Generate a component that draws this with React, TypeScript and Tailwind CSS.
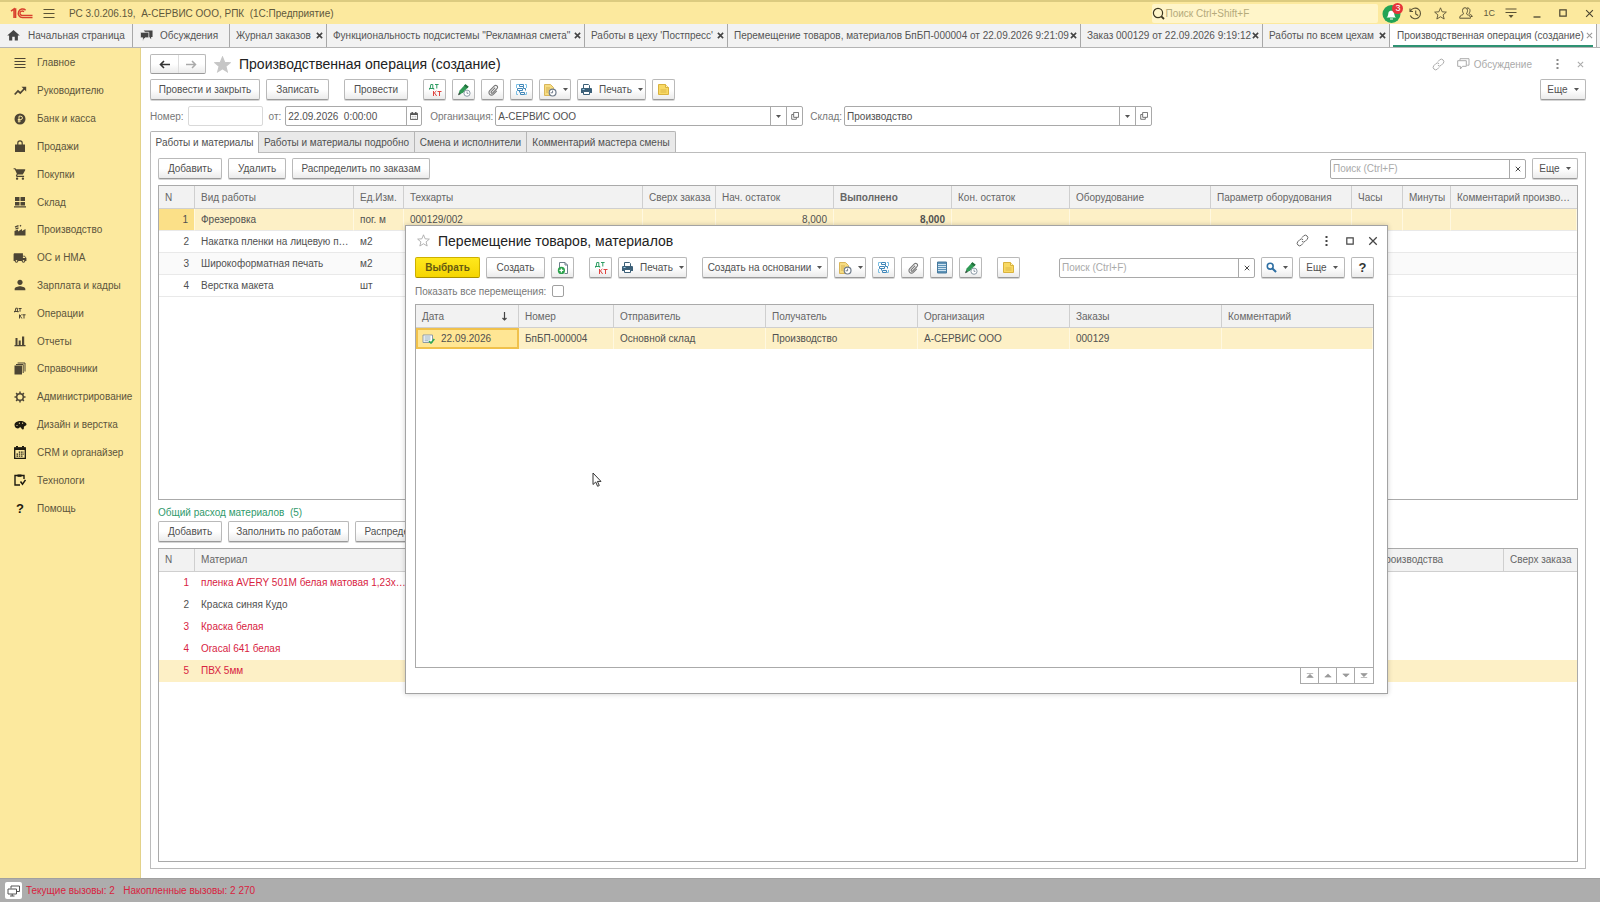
import React from "react";
import { MdHome, MdShoppingCart, MdLocalShipping, MdPerson } from "react-icons/md";

type Kids = { children?: React.ReactNode };

/* ---------- icons ---------- */

function Svg({ w = 16, h = 16, box, children }: Kids & { w?: number; h?: number; box?: string }) {
  return (
    <svg width={w} height={h} viewBox={box ?? `0 0 ${w} ${h}`} fill="none" className="shrink-0" aria-hidden="true">
      {children}
    </svg>
  );
}

const Logo = () => (
  <Svg w={23} h={12}>
    <path d="M1 4.2 4 2v9M4 2h1.6v9" stroke="#d8402c" strokeWidth="1.5" />
    <path d="M15.6 3.2A4.3 4.3 0 1 0 12.4 10.6H22.5" stroke="#d8402c" strokeWidth="1.5" />
    <path d="M13.9 4.8A2.2 2.2 0 1 0 12.4 8.4H22.5" stroke="#d8402c" strokeWidth="1.3" />
  </Svg>
);
const Burger = () => (
  <Svg w={12} h={11}>
    <path d="M0.5 1.5h11M0.5 5.5h11M0.5 9.5h11" stroke="#5a5235" strokeWidth="1.1" />
  </Svg>
);
const Caret = () => (
  <Svg w={5} h={3}>
    <path d="M0 0h5L2.5 3z" fill="#555" />
  </Svg>
);
const Cross = ({ size = 7, color = "#444", weight = 1.8 }: { size?: number; color?: string; weight?: number }) => (
  <Svg w={size} h={size} box="0 0 8 8">
    <path d="M1 1l6 6M7 1L1 7" stroke={color} strokeWidth={weight} />
  </Svg>
);
const OpenIcon = () => (
  <Svg w={8} h={8} box="0 0 9 9">
    <path d="M3 0.5h5.5V6H3zM3 2.8H0.8v5.4H6V6" stroke="#666" />
  </Svg>
);
const CalendarIcon = () => (
  <Svg w={8} h={8} box="0 0 9 9">
    <path d="M0.5 1.5h8v7h-8z" stroke="#555" />
    <path d="M0.5 2.5h8M2.5 0v2M6.5 0v2" stroke="#555" strokeWidth="1.6" />
    <path d="M2 5h5M2 7h5" stroke="#999" strokeDasharray="1 1" />
  </Svg>
);
const DtKt = () => (
  <Svg w={14} h={14}>
    <path d="M1 5.5h5M1.5 5.5V6.6M5.8 5.5v1.1M2.2 5.3 2.8 1.5h2v4M7 1.5h3.6M8.8 1.5v4" stroke="#2e9d63" />
    <path d="M5.5 8v5M5.7 10.6 8.3 8M6.6 10l2 3M9.5 8.5h4M11.5 8.5V13" stroke="#e0433f" />
  </Svg>
);
const PenClock = () => (
  <Svg w={14} h={14}>
    <path d="M1.2 12.2 2.6 7.6 8.4 1.2 11.6 3.8 6.2 9.6z" fill="#2f9a55" />
    <path d="M1.2 12.2 2 9.4l1.8 1.6z" fill="#444" />
    <path d="M8.4 1.2l3.2 2.6-1.4 1.5L7 2.7z" fill="#23703d" />
    <circle cx="10" cy="10.2" r="3.1" fill="#fff" stroke="#8a99a5" />
    <path d="M10 8.5v1.9h1.4" stroke="#8a99a5" />
  </Svg>
);
const Clip = () => (
  <Svg w={12} h={12} box="0 0 14 14">
    <path d="M9.6 4.2 5 9a1.1 1.1 0 0 0 1.6 1.5l5-5.2a2.1 2.1 0 0 0-3-3L3.2 7.8a3 3 0 0 0 4.2 4.3l4-4.1" stroke="#777" strokeWidth="1.3" />
  </Svg>
);
const Structure = () => (
  <Svg w={13} h={13}>
    <path d="M1.5 5V1.500H4M10 1.5h1.5V5M1.5 8v3.500H3M11.500 9v2.500H10" stroke="#7cc0e4" />
    <path d="M4.500 1.500h4v2h-4zM2.500 5.500h5v2h-5zM5.500 9.500h4v2h-4z" stroke="#3f86b8" />
    <path d="M8.500 3.500v2h2v2M4.500 7.500v2" stroke="#3f86b8" />
  </Svg>
);
const DocClock = () => (
  <Svg w={14} h={14}>
    <path d="M1.5 1.5h6l3 3v8h-9z" fill="#f6dc82" stroke="#d9b65a" />
    <path d="M3 5h4M3 7h3M3 9h2" stroke="#d4b050" />
    <circle cx="9.6" cy="9.6" r="3.4" fill="#fff" stroke="#6d7a8a" strokeWidth="1.2" />
    <path d="M9.6 7.6v2.2h-2" stroke="#6d7a8a" />
  </Svg>
);
const Printer = () => (
  <Svg w={13} h={13}>
    <path d="M3.5 5V1.5h5l1 1V5" fill="#fff" stroke="#3c6078" />
    <path d="M1 6a1 1 0 0 1 1-1h9a1 1 0 0 1 1 1v4H1z" fill="#3c6078" />
    <path d="M3.5 8.5h6v3h-6z" fill="#fff" stroke="#3c6078" />
    <path d="M2.5 6.5h2" stroke="#9fd0ee" />
  </Svg>
);
const Note = () => (
  <Svg w={13} h={13}>
    <path d="M1.5 1.5h7l3 3v7h-10z" fill="#f8d964" stroke="#d9b23e" />
    <path d="M8.5 1.5v3h3" fill="#fff2b8" stroke="#d9b23e" />
    <path d="M3.5 7h6M3.5 9h6" stroke="#dcb747" />
  </Svg>
);
const NewDoc = () => (
  <Svg w={14} h={14}>
    <path d="M3.5 7V1.5h5.5l2.5 2.5v8.5H8.5" fill="#fff" stroke="#6e7f8c" />
    <path d="M9 1.5V4h2.5" stroke="#6e7f8c" />
    <circle cx="5.4" cy="9.4" r="3.6" fill="#2ba24c" />
    <path d="M5.4 7.4v4M3.4 9.4h4" stroke="#fff" strokeWidth="1.3" />
  </Svg>
);
const ListDoc = () => (
  <Svg w={12} h={13}>
    <path d="M1.5 1h9v11h-9z" fill="#5d93b8" />
    <path d="M1.5 3.5h9M1.5 5.5h9M1.5 7.5h9M1.5 9.5h9" stroke="#cfe3f0" />
    <path d="M1.5 1h9v11h-9z" stroke="#47799c" />
  </Svg>
);
const Magnifier = () => (
  <Svg w={11} h={11} box="0 0 12 12">
    <circle cx="4.6" cy="4.6" r="3.2" stroke="#2e6fa3" strokeWidth="1.7" />
    <path d="M7 7l4 4" stroke="#2e6fa3" strokeWidth="2.2" />
  </Svg>
);
const LinkIcon = ({ color }: { color: string }) => (
  <Svg w={13} h={13}>
    <path d="M6 3.6 7.8 1.7a2.5 2.5 0 0 1 3.5 3.5L9.2 7.3a2.3 2.3 0 0 1-3.3 0M7 9.4 5.2 11.3a2.5 2.5 0 0 1-3.5-3.5L3.8 5.7a2.3 2.3 0 0 1 3.3 0" stroke={color} />
  </Svg>
);
const Dots = ({ color }: { color: string }) => (
  <Svg w={3} h={10}>
    <path d="M0.5 0h2v2h-2zM0.5 4h2v2h-2zM0.5 8h2v2h-2z" fill={color} />
  </Svg>
);
const Square = ({ size = 9, color = "#444" }: { size?: number; color?: string }) => (
  <Svg w={size} h={size} box="0 0 8 8">
    <path d="M0.8 0.8h6.4v6.4H0.8z" stroke={color} strokeWidth="1.2" />
  </Svg>
);
const Star = ({ size, fill, stroke }: { size: number; fill: string; stroke: string }) => (
  <Svg w={size} h={size} box="0 0 16 16">
    <path d="M8 1l2 4.9 5.2.4-4 3.4 1.3 5.1L8 12l-4.5 2.8 1.3-5.1-4-3.4L6 5.9z" fill={fill} stroke={stroke} strokeWidth="1.1" />
  </Svg>
);
const Chat = ({ solid }: { solid?: boolean }) =>
  solid ? (
    <Svg w={13} h={12} box="0 0 14 12">
      <path d="M4 0h9.5v7H12V9.5L10 7.2" fill="#444" />
      <path d="M0.5 2h9v6h-4L3 11V8H0.5z" fill="#444" stroke="#f2f2f2" strokeWidth="0.8" />
    </Svg>
  ) : (
    <Svg w={13} h={12}>
      <path d="M3 2.5V0.7h9v6.5h-1.8M0.7 2.7h8.6v5.6H5.5L3.4 11V8.3H0.7z" stroke="#aaa" />
    </Svg>
  );

const side = "#4d4534";
const MenuIcons: Record<string, React.ReactNode> = {
  lines: (
    <Svg w={12} h={12}>
      <path d="M0.5 1.5h11M0.5 4.5h11M0.5 7.5h11M0.5 10.5h11" stroke={side} />
    </Svg>
  ),
  trend: (
    <Svg w={13} h={10}>
      <path d="M0.700 8.500L4 5l2.300 2L11 2" stroke={side} strokeWidth="1.700" />
      <path d="M7.500 0.800h4.700v4.700z" fill={side} />
    </Svg>
  ),
  ruble: (
    <Svg w={12} h={12}>
      <circle cx="6" cy="6" r="5.5" fill={side} />
      <path d="M5 9.5V3.2h1.8a1.6 1.6 0 0 1 0 3.3H3.8M3.8 8h3" stroke="#fce99e" />
    </Svg>
  ),
  bag: (
    <Svg w={12} h={12}>
      <path d="M1 4.5h10V12H1z" fill={side} />
      <path d="M3.8 6V3a2.2 2.2 0 0 1 4.4 0v3" stroke={side} strokeWidth="1.2" />
    </Svg>
  ),
  cart: <MdShoppingCart size={14} color={side} />,
  boxes: (
    <Svg w={12} h={12}>
      <path d="M1 1h4.5v4H1zM6.5 1H11v4H6.5zM1 6h4.5v3.5H1zM6.5 6H11v3.5H6.5zM0 10.3h12v1.2H0z" fill={side} />
    </Svg>
  ),
  factory: (
    <Svg w={12} h={12}>
      <path d="M0.5 11.5V7L4 5.500v2L8 5v2l3.500-2v6.500z" fill={side} />
      <path d="M1 3.200l3.500-1.500M1.500 5l3-1.200M6 2.200l1-1" stroke={side} strokeWidth="1.3" />
    </Svg>
  ),
  truck: <MdLocalShipping size={14} color={side} />,
  person: <MdPerson size={16} color={side} />,
  dtkt: (
    <Svg w={12} h={12}>
      <path d="M0 4.5h4.4M0.5 4v1.3M4 4v1.3M1.2 4.2l.6-3h1.6v3M4.6 1.5h3M6 1.5v3.2M5.5 7.5v4M5.6 9.6l2-2.1M6.4 9.2l1.5 2.3M8.4 7.8h3.2M10 7.8v3.7" stroke={side} />
    </Svg>
  ),
  chart: (
    <Svg w={12} h={12}>
      <path d="M1.500 3h2v7h-2zM4.700 5.500h2V10h-2zM8 1.500h2.200V10H8zM0.5 10h11v1.200H0.5z" fill={side} />
    </Svg>
  ),
  books: (
    <Svg w={12} h={13}>
      <path d="M0.5 3.5h7.5v9H0.5z" fill={side} />
      <path d="M2 2.5h7.2v8.5M3.6 1H11v8.5" stroke={side} />
    </Svg>
  ),
  gear: (
    <Svg w={12} h={12}>
      <circle cx="6" cy="6" r="3.3" stroke={side} strokeWidth="1.5" />
      <path d="M6 0.5v2M6 9.5v2M0.5 6h2M9.5 6h2M2.1 2.1l1.4 1.4M8.5 8.5l1.4 1.4M9.9 2.1 8.5 3.5M3.5 8.5 2.1 9.9" stroke={side} strokeWidth="1.5" />
    </Svg>
  ),
  palette: (
    <Svg w={13} h={10}>
      <path d="M6.500 1C3 1 .5 2.600.5 5S2.500 8.500 4 8.500c1 0 1-1.300 2.200-1.300S7.500 9.500 9 9.500s.3-2.500 1.500-3.200 2-.8 2-2S10 1 6.500 1z" fill="#1d1a10" />
      <circle cx="3" cy="5.500" r="0.6" fill="#fce99e" />
      <circle cx="5.400" cy="3.200" r="0.6" fill="#fce99e" />
      <circle cx="8.600" cy="3.200" r="0.6" fill="#fce99e" />
    </Svg>
  ),
  calendar: (
    <Svg w={12} h={13}>
      <path d="M0.700 2h10.600v10.300H0.700z" stroke="#1d1a10" strokeWidth="1.3" />
      <path d="M0.500 1.500h11v2.500h-11z" fill="#1d1a10" />
      <path d="M2 0.800h2M8 0.800h2" stroke="#1d1a10" strokeWidth="1.500" />
      <path d="M4.800 6.200h5M2.500 8.200h7.500M2.500 10.200h6" stroke="#1d1a10" strokeWidth="1.200" strokeDasharray="1.500 0.800" />
    </Svg>
  ),
  clipboard: (
    <Svg w={12} h={12}>
      <path d="M6 11H1V1.500h9V5" stroke="#1d1a10" strokeWidth="1.400" />
      <path d="M3.500 0.500h4v2.300h-4z" fill="#1d1a10" />
      <path d="M6.500 7.500l2 2.800L11.500 6" stroke="#1d1a10" strokeWidth="1.500" />
    </Svg>
  ),
  help: <b className="text-[13px] leading-none text-[#1d1a10]">?</b>,
};

/* ---------- controls ---------- */

function Btn({ children, label, className = "px-2.5" }: Kids & { label?: string; className?: string }) {
  return (
    <button
      type="button"
      aria-label={label}
      className={`flex h-[21px] shrink-0 items-center justify-center gap-1.5 rounded-[2px] border border-[#b9b9b9] border-b-[#9a9a9a] bg-linear-to-b from-white from-50% to-[#ebebeb] whitespace-nowrap shadow-[0_1px_0_#d5d5d5] ${className}`}
    >
      {children}
    </button>
  );
}

function SearchBox({ label }: { label: string }) {
  return (
    <div className="flex h-5 w-[196px] items-stretch rounded-[2px] border border-[#a9a9a9] bg-white">
      <input type="search" aria-label={label} placeholder="Поиск (Ctrl+F)" className="min-w-0 flex-1 px-0.5 outline-none placeholder:text-[#aaa]" />
      <button type="button" aria-label="Очистить поиск" className="flex w-4 items-center justify-center border-l border-[#a9a9a9]">
        <Cross size={6} weight={1.3} />
      </button>
    </div>
  );
}

function RefField({ id, label, value }: { id: string; label: string; value: string }) {
  return (
    <div className="flex items-center gap-0.5">
      <label htmlFor={id} className="text-[#777]">{label}</label>
      <div className="flex h-5 w-[308px] items-stretch rounded-[2px] border border-[#a9a9a9] bg-white">
        <select id={id} className="min-w-0 flex-1 appearance-none px-0.5 outline-none">
          <option>{value}</option>
        </select>
        <span className="flex w-4 items-center justify-center border-l border-[#a9a9a9]"><Caret /></span>
        <button type="button" aria-label="Открыть" className="flex w-4 items-center justify-center border-l border-[#a9a9a9]"><OpenIcon /></button>
      </div>
    </div>
  );
}

const th = "h-[23px] truncate border-r border-b border-[#cfcfcf] bg-[#f2f2f2] pr-0.5 pl-1.5 text-left text-[#666] last:border-r-0";

/* ---------- page parts ---------- */

const openTabs = [
  { text: "Журнал заказов", w: "w-[97px]" },
  { text: "Функциональность подсистемы \"Рекламная смета\"", w: "w-[258px]" },
  { text: "Работы в цеху 'Постпресс'", w: "w-[143px]" },
  { text: "Перемещение товаров, материалов БпБП-000004 от 22.09.2026 9:21:09", w: "w-[353px]" },
  { text: "Заказ 000129 от 22.09.2026 9:19:12", w: "w-[182px]" },
  { text: "Работы по всем цехам", w: "w-[127px]" },
];

const menu: [string, string][] = [
  ["lines", "Главное"], ["trend", "Руководителю"], ["ruble", "Банк и касса"], ["bag", "Продажи"],
  ["cart", "Покупки"], ["boxes", "Склад"], ["factory", "Производство"], ["truck", "ОС и НМА"],
  ["person", "Зарплата и кадры"], ["dtkt", "Операции"], ["chart", "Отчеты"], ["books", "Справочники"],
  ["gear", "Администрирование"], ["palette", "Дизайн и верстка"], ["calendar", "CRM и органайзер"],
  ["clipboard", "Технологи"], ["help", "Помощь"],
];

function TitleBar() {
  return (
    <header className="flex h-6 items-center border-t-2 border-[#dccb80] bg-[#fce99e] pr-1.5 pl-2.5 text-[#5f583c]">
      <Logo />
      <button type="button" aria-label="Главное меню" className="ml-2.5"><Burger /></button>
      <h1 className="ml-3.5 whitespace-pre">РС 3.0.206.19,  А-СЕРВИС ООО, РПК  (1С:Предприятие)</h1>
      <div className="ml-auto flex h-[19px] w-[226px] items-center rounded-[2px] bg-[#fff5c9]">
        <Svg w={13} h={13}>
          <circle cx="6" cy="6" r="4.600" stroke="#3c3620" strokeWidth="1.200" />
          <path d="M9.300 9.300l2.700 2.700" stroke="#3c3620" strokeWidth="1.800" />
        </Svg>
        <input type="search" aria-label="Глобальный поиск" placeholder="Поиск Ctrl+Shift+F" className="min-w-0 flex-1 outline-none placeholder:text-[#b5aa7b]" />
      </div>
      <button type="button" aria-label="Уведомления" className="relative ml-1">
        <Svg w={19} h={19}>
          <circle cx="9.500" cy="10" r="9" fill="#23a455" />
          <path d="M4.500 13.500c1.500-1 1.500-2.500 2-5 .5-2.500 5-2.500 5.500 0s.5 4 2 5zM8 14.500h3v1H8z" fill="#fff" />
        </Svg>
        <span className="absolute -top-px -right-0.5 flex size-[11px] items-center justify-center rounded-full bg-[#e5343a] text-[9px] leading-none text-white">3</span>
      </button>
      <div className="ml-2 flex items-center gap-3">
        <button type="button" aria-label="История">
          <Svg w={13} h={13}>
            <path d="M1.500 4A5.300 5.300 0 1 1 1.300 8.500M1 1.500V4.500H4M6.700 3.500v3.500l2.500 1.500" stroke="#5a5235" strokeWidth="1.100" />
          </Svg>
        </button>
        <button type="button" aria-label="Избранное"><Star size={13} fill="none" stroke="#5a5235" /></button>
        <button type="button" aria-label="Пользователи">
          <Svg w={14} h={13}>
            <path d="M3.500 3.500a2.500 2.800 0 0 1 5 0c0 2-1 2.500-1 3.500 0 1 4 .8 4 3.500v.7H.7v-.7C.7 7.800 4.500 8 4.500 7S3.500 5.500 3.500 3.500zM8 1a2.500 2.500 0 0 1 3 2.500c0 1.800-.8 2.300-.8 3.200S13.300 7.800 13.300 9.500H12" stroke="#5a5235" />
          </Svg>
        </button>
        <button type="button" className="-mx-0.5 text-[9px]">1С</button>
        <button type="button" aria-label="Сервис">
          <Svg w={12} h={12}>
            <path d="M0.500 2h11M0.500 5.500h11" stroke="#5a5235" strokeWidth="1.200" />
            <path d="M3.500 8h5L6 11z" fill="#5a5235" />
          </Svg>
        </button>
      </div>
      <div className="ml-4 flex items-center gap-[18px]">
        <button type="button" aria-label="Свернуть"><Svg w={8} h={9}><path d="M0.500 8h7" stroke="#4a4430" strokeWidth="1.300" /></Svg></button>
        <button type="button" aria-label="Развернуть"><Square size={8} color="#4a4430" /></button>
        <button type="button" aria-label="Закрыть"><Cross size={9} color="#4a4430" weight={1} /></button>
      </div>
    </header>
  );
}

function WindowTabs() {
  const cell = "flex shrink-0 items-center border-r border-[#a8a8a8]";
  return (
    <nav className="flex h-6 border-b border-[#b4b4b4] bg-[#f2f2f2] text-[#555]" aria-label="Открытые окна">
      <a href="#home" className={`${cell} w-[133px] pl-1.5 whitespace-nowrap`}><MdHome size={15} color="#444" /><span className="ml-[7px]">Начальная страница</span></a>
      <a href="#talks" className={`${cell} w-[97px] pl-[7px]`}><Chat solid /><span className="ml-[7px]">Обсуждения</span></a>
      {openTabs.map((t) => (
        <div key={t.text} className={`${cell} ${t.w} justify-between pr-[3px] pl-1.5`}>
          <a href="#tab" className="whitespace-nowrap">{t.text}</a>
          <button type="button" aria-label="Закрыть вкладку"><Cross /></button>
        </div>
      ))}
      <div className={`${cell} w-[207px] bg-white px-[3px]`}>
        <div className="flex h-full flex-1 items-center justify-between border-b-2 border-[#2e9273] pt-0.5 pl-1">
          <a href="#tab" aria-current="page" className="whitespace-nowrap">Производственная операция (создание)</a>
          <button type="button" aria-label="Закрыть вкладку"><Cross color="#999" weight={1.200} /></button>
        </div>
      </div>
    </nav>
  );
}

function Sidebar() {
  return (
    <nav className="w-[141px] shrink-0 border-r border-[#e3d28a] bg-[#fce99e] pt-px text-[#5c553c]" aria-label="Разделы">
      <ul className="grid h-[473px] auto-rows-fr">
        {menu.map(([icon, text]) => (
          <li key={text} className="flex">
            <a href="#section" className="flex flex-1 items-center whitespace-nowrap">
              <span className="ml-3 flex w-4 justify-center">{MenuIcons[icon]}</span>
              <span className="ml-[9px]">{text}</span>
            </a>
          </li>
        ))}
      </ul>
    </nav>
  );
}

const workCols = [
  { t: "N", w: 36 }, { t: "Вид работы", w: 159 }, { t: "Ед.Изм.", w: 50 }, { t: "Техкарты", w: 239 },
  { t: "Сверх заказа", w: 73 }, { t: "Нач. остаток", w: 118 }, { t: "Выполнено", w: 118 }, { t: "Кон. остаток", w: 118 },
  { t: "Оборудование", w: 141 }, { t: "Параметр оборудования", w: 141 }, { t: "Часы", w: 51 }, { t: "Минуты", w: 48 },
  { t: "Комментарий производства" },
] as { t: string; w?: number }[];
const works = [
  ["1", "Фрезеровка", "пог. м", "000129/002", "", "8,000", "8,000", "", "", "", "", "", ""],
  ["2", "Накатка пленки на лицевую поверхность", "м2", "", "", "", "", "", "", "", "", "", ""],
  ["3", "Широкоформатная печать", "м2", "", "", "", "", "", "", "", "", "", ""],
  ["4", "Верстка макета", "шт", "", "", "", "", "", "", "", "", "", ""],
];

function WorksTable() {
  return (
    <div className="min-h-0 flex-1 border border-[#aaa]">
      <table className="w-full table-fixed border-separate border-spacing-0">
        <colgroup>{workCols.map((c) => <col key={c.t} style={c.w ? { width: c.w } : undefined} />)}</colgroup>
        <thead>
          <tr>{workCols.map((c, i) => <th key={c.t} className={`${th} ${i === 6 ? "font-bold" : "font-normal"}`}>{c.t}</th>)}</tr>
        </thead>
        <tbody>
          {works.map((r, ri) => (
            <tr key={r[0]} className={ri === 0 ? "bg-[#fdf0c6]" : ri === 2 ? "bg-[#fafafa]" : ""}>
              {r.map((c, i) => (
                <td
                  key={i}
                  className={`h-[22px] truncate border-b border-[#e9e9e9] pl-1.5 ${ri === 0 ? "border-r border-r-[#fff8e0]" : ""} ${ri === 0 && i === 0 ? "bg-[#fbe088]" : ""} ${i === 0 || i === 5 || i === 6 ? "pr-1.5 text-right" : "pr-0.5"} ${i === 6 ? "font-bold" : ""}`}
                >
                  {c}
                </td>
              ))}
            </tr>
          ))}
        </tbody>
      </table>
    </div>
  );
}

const materials: [string, boolean][] = [
  ["пленка AVERY 501M белая матовая 1,23х50 м", true],
  ["Краска синяя Кудо", false],
  ["Краска белая", true],
  ["Oracal 641 белая", true],
  ["ПВХ 5мм", true],
];

function MaterialsTable() {
  const head = `${th} font-normal`;
  return (
    <div className="min-h-0 flex-1 border border-[#aaa]">
      <table className="w-full table-fixed border-separate border-spacing-0">
        <colgroup>
          <col className="w-9" /><col className="w-[212px]" /><col /><col className="w-[162px]" /><col className="w-[73px]" />
        </colgroup>
        <thead>
          <tr>
            <th className={head}>N</th><th className={head}>Материал</th><th className={head} aria-label="Количество" />
            <th className={head}>Склад производства</th><th className={head}>Сверх заказа</th>
          </tr>
        </thead>
        <tbody>
          {materials.map(([name, red], i) => (
            <tr key={name} className={`${i === 4 ? "bg-[#fdf0c6]" : ""} ${red ? "text-[#d8233f]" : ""}`}>
              <td className="h-[22px] px-1.5 text-right">{i + 1}</td>
              <td className="truncate pl-1.5">{name}</td>
              <td /><td /><td />
            </tr>
          ))}
        </tbody>
      </table>
    </div>
  );
}

function FormHeader() {
  return (
    <>
      <div className="flex items-center pt-1.5">
        <div className="flex h-5 w-14 items-stretch rounded-[2px] border border-[#b9b9b9] border-b-[#9a9a9a] bg-linear-to-b from-white from-50% to-[#ebebeb]">
          <button type="button" aria-label="Назад" className="flex flex-1 items-center justify-center border-r border-[#ddd]">
            <Svg w={11} h={9}><path d="M11 4.500H2M5 1L1.500 4.500 5 8" stroke="#333" strokeWidth="1.600" /></Svg>
          </button>
          <button type="button" aria-label="Вперед" className="flex flex-1 items-center justify-center">
            <Svg w={11} h={9}><path d="M0 4.500h9M6 1l3.500 3.500L6 8" stroke="#aaa" strokeWidth="1.500" /></Svg>
          </button>
        </div>
        <button type="button" aria-label="В избранное" className="ml-2"><Star size={17} fill="#c6c6c6" stroke="#c6c6c6" /></button>
        <h2 className="ml-2 text-sm leading-5 text-[#222]">Производственная операция (создание)</h2>
        <div className="ml-auto flex items-center text-[#aaa]">
          <button type="button" aria-label="Ссылка"><LinkIcon color="#aaa" /></button>
          <button type="button" className="ml-3 flex items-center gap-1"><Chat />Обсуждение</button>
          <button type="button" aria-label="Меню" className="ml-6"><Dots color="#888" /></button>
          <button type="button" aria-label="Закрыть" className="mr-0.5 ml-[18px]"><Cross color="#aaa" weight={1.200} /></button>
        </div>
      </div>
      <div className="mt-[5px] flex items-center gap-1.5">
        <Btn className="w-[110px]">Провести и закрыть</Btn>
        <Btn className="w-[63px]">Записать</Btn>
        <Btn className="ml-[9px] w-16">Провести</Btn>
        <Btn label="Дт Кт" className="ml-[9px] w-[23px]"><DtKt /></Btn>
        <Btn label="Изменить" className="w-[23px]"><PenClock /></Btn>
        <Btn label="Файлы" className="w-[23px]"><Clip /></Btn>
        <Btn label="Структура" className="w-[23px]"><Structure /></Btn>
        <Btn label="Отчеты" className="w-8"><DocClock /><Caret /></Btn>
        <Btn className="w-[69px]"><Printer />Печать<Caret /></Btn>
        <Btn label="Заметка" className="w-[23px]"><Note /></Btn>
        <Btn className="ml-auto w-[46px]">Еще<Caret /></Btn>
      </div>
      <div className="mt-1.5 flex items-center">
        <label htmlFor="num" className="text-[#777]">Номер:</label>
        <input id="num" className="ml-1 h-5 w-[75px] rounded-[2px] border border-[#d9d9d9]" />
        <label htmlFor="date" className="ml-1.5 text-[#777]">от:</label>
        <div className="mr-2 ml-1 flex h-5 w-[137px] items-stretch rounded-[2px] border border-[#a9a9a9]">
          <input id="date" defaultValue="22.09.2026  0:00:00" className="min-w-0 flex-1 px-0.5 outline-none" />
          <button type="button" aria-label="Выбрать дату" className="flex w-[15px] items-center justify-center border-l border-[#a9a9a9]"><CalendarIcon /></button>
        </div>
        <RefField id="org" label="Организация:" value="А-СЕРВИС ООО" />
        <div className="ml-[7px]"><RefField id="store" label="Склад:" value="Производство" /></div>
      </div>
    </>
  );
}

function FormBody() {
  const tab = "h-[21px] whitespace-nowrap border border-b-0 border-l-0 border-[#b5b5b5] bg-[#e9e9e9]";
  return (
    <>
      <div role="tablist" className="relative z-10 mt-[5px] flex">
        <button role="tab" aria-selected="true" className="-mb-px h-[22px] w-[109px] rounded-t-[2px] border border-b-0 border-[#b5b5b5] bg-white whitespace-nowrap">Работы и материалы</button>
        <button role="tab" className={`${tab} w-[156px]`}>Работы и материалы подробно</button>
        <button role="tab" className={`${tab} w-28`}>Смена и исполнители</button>
        <button role="tab" className={`${tab} w-[149px] rounded-tr-[2px]`}>Комментарий мастера смены</button>
      </div>
      <section className="flex min-h-0 flex-1 flex-col border border-[#bcbcbc] px-[7px] pt-[5px] pb-1.5">
        <div className="mb-1.5 flex items-center gap-1.5">
          <Btn className="w-16">Добавить</Btn>
          <Btn className="w-[58px]">Удалить</Btn>
          <Btn className="w-[138px]">Распределить по заказам</Btn>
          <div className="ml-auto"><SearchBox label="Поиск работ" /></div>
          <Btn className="w-[46px]">Еще<Caret /></Btn>
        </div>
        <WorksTable />
        <h3 className="mt-[5px] h-4 leading-4 font-normal whitespace-pre text-[#2f9a6c]">Общий расход материалов  (5)</h3>
        <div className="mb-1.5 flex items-center gap-1.5">
          <Btn className="w-16">Добавить</Btn>
          <Btn className="w-[121px]">Заполнить по работам</Btn>
          <Btn className="w-[138px]">Распределить по заказам</Btn>
        </div>
        <MaterialsTable />
      </section>
    </>
  );
}

const moveCols = ["w-[103px]", "w-[95px]", "w-[152px]", "w-[152px]", "w-[152px]", "w-[152px]", ""];
const moveHeads = ["Номер", "Отправитель", "Получатель", "Организация", "Заказы", "Комментарий"];
const moveRow = ["БпБП-000004", "Основной склад", "Производство", "А-СЕРВИС ООО", "000129", ""];
const scrollShapes = ["M1 1.500h8M5 2.500l4 4H1z", "M5 2l4 4H1z", "M5 6L1 2h8z", "M1 6.500h8M5 5.500l4-4H1z"];

function MoveDialog() {
  return (
    <div
      role="dialog"
      aria-label="Перемещение товаров, материалов"
      className="absolute top-[225px] right-[212px] left-[405px] z-20 flex h-[469px] flex-col border border-[#a3a3a3] bg-white pr-[13px] pb-[9px] pl-[9px] shadow-[0_0_5px_rgba(0,0,0,0.2)]"
    >
      <div className="mb-0.5 flex h-[29px] shrink-0 items-center">
        <button type="button" aria-label="В избранное" className="ml-0.5"><Star size={13} fill="none" stroke="#aaa" /></button>
        <h2 className="ml-2 text-sm text-[#222]">Перемещение товаров, материалов</h2>
        <div className="-mr-1 ml-auto flex items-center">
          <button type="button" aria-label="Ссылка"><LinkIcon color="#666" /></button>
          <button type="button" aria-label="Меню" className="ml-4"><Dots color="#444" /></button>
          <button type="button" aria-label="Развернуть" className="ml-[18px]"><Square size={8} /></button>
          <button type="button" aria-label="Закрыть" className="ml-3.5"><Cross size={10} weight={1} /></button>
        </div>
      </div>
      <div className="flex shrink-0 items-center gap-1.5">
        <button type="button" className="flex h-[21px] w-[65px] items-center justify-center rounded-[2px] border border-[#cdb000] border-b-[#a99000] bg-linear-to-b from-[#ffe81c] to-[#f5d500] font-bold text-[#665a10]">Выбрать</button>
        <Btn className="w-[59px]">Создать</Btn>
        <Btn label="Создать копированием" className="w-[23px]"><NewDoc /></Btn>
        <Btn label="Дт Кт" className="ml-[9px] w-[23px]"><DtKt /></Btn>
        <Btn className="w-[69px]"><Printer />Печать<Caret /></Btn>
        <Btn className="ml-[9px] w-[126px]">Создать на основании<Caret /></Btn>
        <Btn label="Отчеты" className="w-8"><DocClock /><Caret /></Btn>
        <Btn label="Структура" className="w-[23px]"><Structure /></Btn>
        <Btn label="Файлы" className="w-[23px]"><Clip /></Btn>
        <Btn label="Реестр" className="w-[23px]"><ListDoc /></Btn>
        <Btn label="Изменить" className="w-[23px]"><PenClock /></Btn>
        <Btn label="Заметка" className="ml-[9px] w-[23px]"><Note /></Btn>
        <div className="ml-auto"><SearchBox label="Поиск перемещений" /></div>
        <Btn label="Найти" className="w-8"><Magnifier /><Caret /></Btn>
        <Btn className="w-[46px]">Еще<Caret /></Btn>
        <Btn className="w-[23px]"><b className="text-[13px] text-[#333]">?</b></Btn>
      </div>
      <div className="flex h-[26px] shrink-0 items-center gap-1.5 text-[#777]">
        <label htmlFor="all">Показать все перемещения:</label>
        <input id="all" type="checkbox" className="size-3 appearance-none rounded-[2px] border border-[#a0a0a0] bg-white" />
      </div>
      <div className="min-h-0 flex-1 border border-[#aaa]">
        <table className="w-full table-fixed border-separate border-spacing-0">
          <colgroup>{moveCols.map((c, i) => <col key={i} className={c} />)}</colgroup>
          <thead>
            <tr>
              <th className={`${th} font-normal`}>
                <span className="flex items-center justify-between pr-2">
                  Дата
                  <Svg w={7} h={9}><path d="M3.500 0v8M1.500 6L3.500 8 5.500 6" stroke="#444" strokeWidth="1.200" /></Svg>
                </span>
              </th>
              {moveHeads.map((h) => <th key={h} className={`${th} font-normal`}>{h}</th>)}
            </tr>
          </thead>
          <tbody>
            <tr className="bg-[#fdf0c6]">
              <td className="h-[21px] border-2 border-[#f0c14b] bg-[#ffe694] px-1">
                <span className="flex items-center gap-1.5">
                  <Svg w={13} h={10}>
                    <path d="M1 1h9.500v7.500H1z" fill="#fff" stroke="#8d9aa5" />
                    <path d="M2.500 3h6M2.500 5h6M2.500 6.800h4" stroke="#8fa9bb" />
                    <path d="M7 7l2 2 3.300-4" stroke="#32a852" strokeWidth="1.600" />
                  </Svg>
                  22.09.2026
                </span>
              </td>
              {moveRow.map((c, i) => <td key={i} className="truncate border-r border-[#fff8e0] px-1.5">{c}</td>)}
            </tr>
          </tbody>
        </table>
      </div>
      <div className="flex shrink-0 justify-end">
        <div className="flex divide-x divide-[#aaa] border border-t-0 border-[#aaa]">
          {scrollShapes.map((d, i) => (
            <button key={d} type="button" aria-label={["В начало", "Вверх", "Вниз", "В конец"][i]} className="flex h-[15px] w-[18px] items-center justify-center">
              <Svg w={8} h={7} box="0 0 10 8"><path d={d} fill="#999" stroke="#999" strokeWidth="0.800" /></Svg>
            </button>
          ))}
        </div>
      </div>
    </div>
  );
}

export default function App() {
  return (
    <div className="relative flex min-h-screen flex-col overflow-hidden bg-white font-['Liberation_Sans',Arial,sans-serif] text-[10px] leading-[15px] text-[#505050]">
      <TitleBar />
      <WindowTabs />
      <div className="flex min-h-0 flex-1">
        <Sidebar />
        <main className="flex min-w-0 flex-1 flex-col pr-3.5 pb-[9px] pl-[9px]">
          <FormHeader />
          <FormBody />
        </main>
      </div>
      <footer className="flex h-6 shrink-0 items-center gap-1 border-t border-[#a0a0a0] bg-[#adadad] pl-[5px] text-[#d8233f]">
        <button type="button" aria-label="Вызовы" className="flex size-[17px] items-center justify-center rounded-[2px] bg-white">
          <Svg w={13} h={12}>
            <path d="M4 3.500V1h8.500v5.500H9.500M1 4h8.500v5H1zM3 11h4.500M5.200 9v2" stroke="#555" />
          </Svg>
        </button>
        <span className="whitespace-pre">Текущие вызовы: 2   Накопленные вызовы: 2 270</span>
      </footer>
      <MoveDialog />
      <div className="pointer-events-none absolute top-[472px] left-[592px] z-30">
        <Svg w={10} h={15}>
          <path d="M1 1v11.500l2.700-2.500 1.900 4.300 1.700-.8-1.900-4.100H9z" fill="#fff" stroke="#333" />
        </Svg>
      </div>
    </div>
  );
}
